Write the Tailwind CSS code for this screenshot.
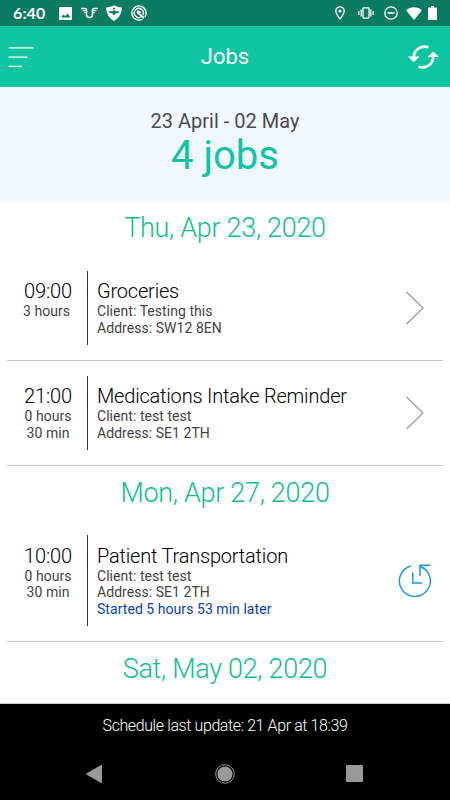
<!DOCTYPE html>
<html lang="en">
<head>
  <meta charset="UTF-8">
  <meta name="viewport" content="width=device-width, initial-scale=1.0">
  <title>Jobs</title>
  <script src="https://cdn.jsdelivr.net/npm/@tailwindcss/browser@4"></script>
</head>
<body class="bg-white font-['Roboto',sans-serif] text-[#444]">
  <div class="w-[450px] h-[800px] flex flex-col overflow-hidden whitespace-nowrap">

    <!-- Status bar -->
    <div class="h-[26px] shrink-0 bg-[#0a7b62] text-white flex items-center justify-between pl-[13px] pr-[13px]">
      <div class="flex items-center">
        <span class="w-[46px] font-['Lato',sans-serif] font-bold text-[16px] leading-[26px] tracking-[0.1px]">6:40</span>
        <svg class="w-[13px] h-[13px]" viewBox="0 0 13 13"><path fill="#fff" fill-rule="evenodd" d="M1 0h11a1 1 0 0 1 1 1v11a1 1 0 0 1-1 1H1a1 1 0 0 1-1-1V1a1 1 0 0 1 1-1zM2 10.500h9.500L8.500 6.500 6.200 9.300 4.500 7.500z"/></svg>
        <svg class="ml-[9px] w-[17px] h-[12px]" viewBox="0 0 17 12" fill="none" stroke="#fff"><path stroke-width="1.500" d="M0 1.500H4Q5.500 1.500 5.500 3V7.500C5.500 9.500 6.800 10.500 8.500 10.500S11.500 9.500 11.500 7.500V3Q11.500 1.500 13 1.500H17"/><path stroke-width="1" d="M1.500 3.700H5M3 5.700H5M12 3.700h3.500M12 5.700h2"/></svg>
        <svg class="ml-[8px] w-[16px] h-[16px]" viewBox="0 0 16 16"><path fill="#fff" d="M8 .3c2 1.300 4.500 1.900 7.900 2.200C15.800 8.500 13 13 8 16 3 13 .2 8.500.1 2.500 3.500 2.200 6 1.600 8 .3z"/><path fill="#0a7b62" d="M2.500 6.200h4C6.800 5.600 7.300 5.500 8 5.500s1.200.1 1.500.7h4c-.7 1.500-2 2.200-4 2.300L8 10.500 6.500 8.500c-2-.1-3.300-.8-4-2.300z"/><circle cx="8" cy="3.800" r="1" fill="#0a7b62"/></svg>
        <svg class="ml-[9px] w-[16px] h-[16px]" viewBox="0 0 16 16" fill="none" stroke="#fff"><path stroke-width="1.400" d="M11.500 14.200A7.100 7.100 0 1 1 14 11.800"/><path stroke-width="1.400" d="M4.800 11.200a4.500 4.500 0 1 1 7-1.200M4.800 11.200c1.500 1.500 3.500 1.700 5 .9"/><path stroke-width="1.800" d="M6 7l7 6"/><path stroke-width="1.400" d="M6 6.500c1.500-.8 3 0 3.500 1.500"/></svg>
      </div>
      <div class="flex items-center">
        <svg class="w-[10px] h-[14px]" viewBox="0 0 10 14"><path fill="none" stroke="#fff" stroke-width="1.300" d="M5 13C2.500 9.800.8 7.500.8 5a4.200 4.200 0 0 1 8.400 0c0 2.500-1.700 4.800-4.200 8z"/><circle cx="5" cy="5" r="1.600" fill="#fff"/></svg>
        <svg class="ml-[13px] w-[16px] h-[12px]" viewBox="0 0 16 12" fill="none" stroke="#fff" stroke-width="1.300"><rect x="5" y=".9" width="6" height="10.200" rx=".5"/><path d="M3.200 2.500v7M12.800 2.500v7M.8 4v4M15.200 4v4"/></svg>
        <svg class="ml-[10px] w-[14px] h-[14px]" viewBox="0 0 14 14" fill="none" stroke="#fff" stroke-width="1.300"><circle cx="7" cy="7" r="6.200"/><path stroke-width="1.600" d="M3.500 7h7"/></svg>
        <svg class="ml-[8px] w-[16px] h-[13px]" viewBox="0 0 16 13"><path fill="#fff" d="M0 3.200C4.500-.8 11.500-.8 16 3.200L8 13z"/></svg>
        <svg class="ml-[6px] w-[9px] h-[14px]" viewBox="0 0 9 14"><path fill="#fff" d="M3 0h3v1.500h2a1 1 0 0 1 1 1V13a1 1 0 0 1-1 1H1a1 1 0 0 1-1-1V2.500a1 1 0 0 1 1-1h2z"/></svg>
      </div>
    </div>

    <!-- Header -->
    <header class="h-[61px] shrink-0 bg-[#0fc5a1] grid grid-cols-3 items-center pl-2 pr-[11px]">
      <svg class="w-[26px] h-[20px]" viewBox="0 0 26 20" stroke="#fff" stroke-width="1.300"><path d="M.5 .9H25.500M.5 10.100H19.500M.5 19.300H13.700"/></svg>
      <h1 class="pl-[3px] text-center text-white text-[22px]">Jobs</h1>
      <svg class="justify-self-end w-[31px] h-[24px]" viewBox="0 0 31 24"><g fill="none" stroke="#fff" stroke-width="2.600"><path d="M20.500 2.300C13 -.3 6 5 5.800 12"/><path d="M10.500 21.700C18 24.300 25 19 25.200 12"/></g><path fill="#fff" d="M0 11.500h11.500L5.800 17.200zM19.500 12h11.500L25.200 6.500z"/></svg>
    </header>

    <!-- Summary -->
    <section class="h-[114px] shrink-0 bg-[#f1f8ff] pt-[22px] text-center">
      <p class="text-[20px] leading-[25px] text-[#4c4c4c]">23 April - 02 May</p>
      <p class="text-[40px] leading-[44px] text-[#0fc5a1]">4 jobs</p>
    </section>

    <!-- Job list -->
    <main class="flex-1 overflow-hidden">
      <h2 class="h-[55px] text-center text-[27px] leading-[54px] font-light tracking-[-0.300px] text-[#0fc08f]">Thu, Apr 23, 2020</h2>

      <div class="mx-[7px] h-[105px] border-b border-[#c8c8c8] py-[15px] flex">
        <div class="w-[81px] shrink-0 border-r border-[#333] pt-[9px] pl-[2px] text-center text-[14px] leading-[16.600px] tracking-[0.050px]">
          <p class="text-[20px] leading-[23px] font-light tracking-[-0.1px] text-black">09:00</p>
          <p class="pr-[3px]">3 hours</p>
        </div>
        <div class="flex-1 pl-[9px] pt-[9px] text-[14px] leading-[16.600px] tracking-[0.050px]">
          <h3 class="text-[20px] leading-[23px] font-light tracking-[-0.2px] text-black">Groceries</h3>
          <p>Client: Testing this</p>
          <p>Address: SW12 8EN</p>
        </div>
        <svg class="self-center mr-[19px] w-[18px] h-[34px]" viewBox="0 0 18 34" fill="none" stroke="#999" stroke-width="1.200"><path d="M.5 1L17 17 .5 33"/></svg>
      </div>

      <div class="mx-[7px] h-[105px] border-b border-[#c8c8c8] py-[15px] flex">
        <div class="w-[81px] shrink-0 border-r border-[#333] pt-[9px] pl-[2px] text-center text-[14px] leading-[16.600px] tracking-[0.050px]">
          <p class="text-[20px] leading-[23px] font-light tracking-[-0.1px] text-black">21:00</p>
          <p>0 hours</p>
          <p>30 min</p>
        </div>
        <div class="flex-1 pl-[9px] pt-[9px] text-[14px] leading-[16.600px] tracking-[0.050px]">
          <h3 class="text-[20px] leading-[23px] font-light tracking-[-0.2px] text-black">Medications Intake Reminder</h3>
          <p>Client: test test</p>
          <p>Address: SE1 2TH</p>
        </div>
        <svg class="self-center mr-[19px] w-[18px] h-[34px]" viewBox="0 0 18 34" fill="none" stroke="#999" stroke-width="1.200"><path d="M.5 1L17 17 .5 33"/></svg>
      </div>

      <h2 class="h-[54px] text-center text-[27px] leading-[54px] font-light tracking-[-0.300px] text-[#0fc08f]">Mon, Apr 27, 2020</h2>

      <div class="mx-[7px] h-[122px] border-b border-[#c8c8c8] py-[15px] flex">
        <div class="w-[81px] shrink-0 border-r border-[#333] pt-[10px] pl-[2px] text-center text-[14px] leading-[16.600px] tracking-[0.050px]">
          <p class="text-[20px] leading-[22.500px] font-light tracking-[-0.1px] text-black">10:00</p>
          <p>0 hours</p>
          <p>30 min</p>
        </div>
        <div class="flex-1 pl-[9px] pt-[10px] text-[14px] leading-[16.600px] tracking-[0.050px]">
          <h3 class="text-[20px] leading-[22.500px] font-light tracking-[-0.2px] text-black">Patient Transportation</h3>
          <p>Client: test test</p>
          <p>Address: SE1 2TH</p>
          <p class="text-[#0a3cc8]">Started 5 hours 53 min later</p>
        </div>
        <svg class="self-center mr-[12px] w-[33px] h-[33px]" viewBox="0 0 33 33" fill="none" stroke="#1a96f0" stroke-width="1.500"><path d="M13 1.900A15.500 15.500 0 1 0 22.500 2.500"/><path d="M32.500 1.300H22V12M22.500 2l2.500 2.500"/><path d="M14.800 8.500V19H24"/></svg>
      </div>

      <h2 class="h-[61px] text-center text-[27px] leading-[54px] font-light tracking-[-0.300px] text-[#0fc08f]">Sat, May 02, 2020</h2>
    </main>

    <!-- Last update and navigation bar -->
    <footer class="h-[97px] shrink-0 border-t border-[#ccc] bg-black">
      <p class="h-[43px] text-center text-[16px] leading-[44px] font-light tracking-[-0.400px] text-white">Schedule last update: 21 Apr at 18:39</p>
      <div class="h-[53px] flex items-center justify-between pl-[86px] pr-[87px]">
        <svg class="w-[16px] h-[18px]" viewBox="0 0 16 18"><path fill="#999" d="M15 0a1 1 0 0 1 1 1V17a1 1 0 0 1-1 1L.3 9.500V8.500z"/></svg>
        <svg class="ml-[2px] w-[20px] h-[20px]" viewBox="0 0 20 20"><circle cx="10" cy="10" r="9.300" fill="none" stroke="#999"/><circle cx="10" cy="10" r="7.600" fill="#999"/></svg>
        <div class="w-[17px] h-[17px] rounded-[1px] bg-[#999]"></div>
      </div>
    </footer>
  </div>
</body>
</html>
